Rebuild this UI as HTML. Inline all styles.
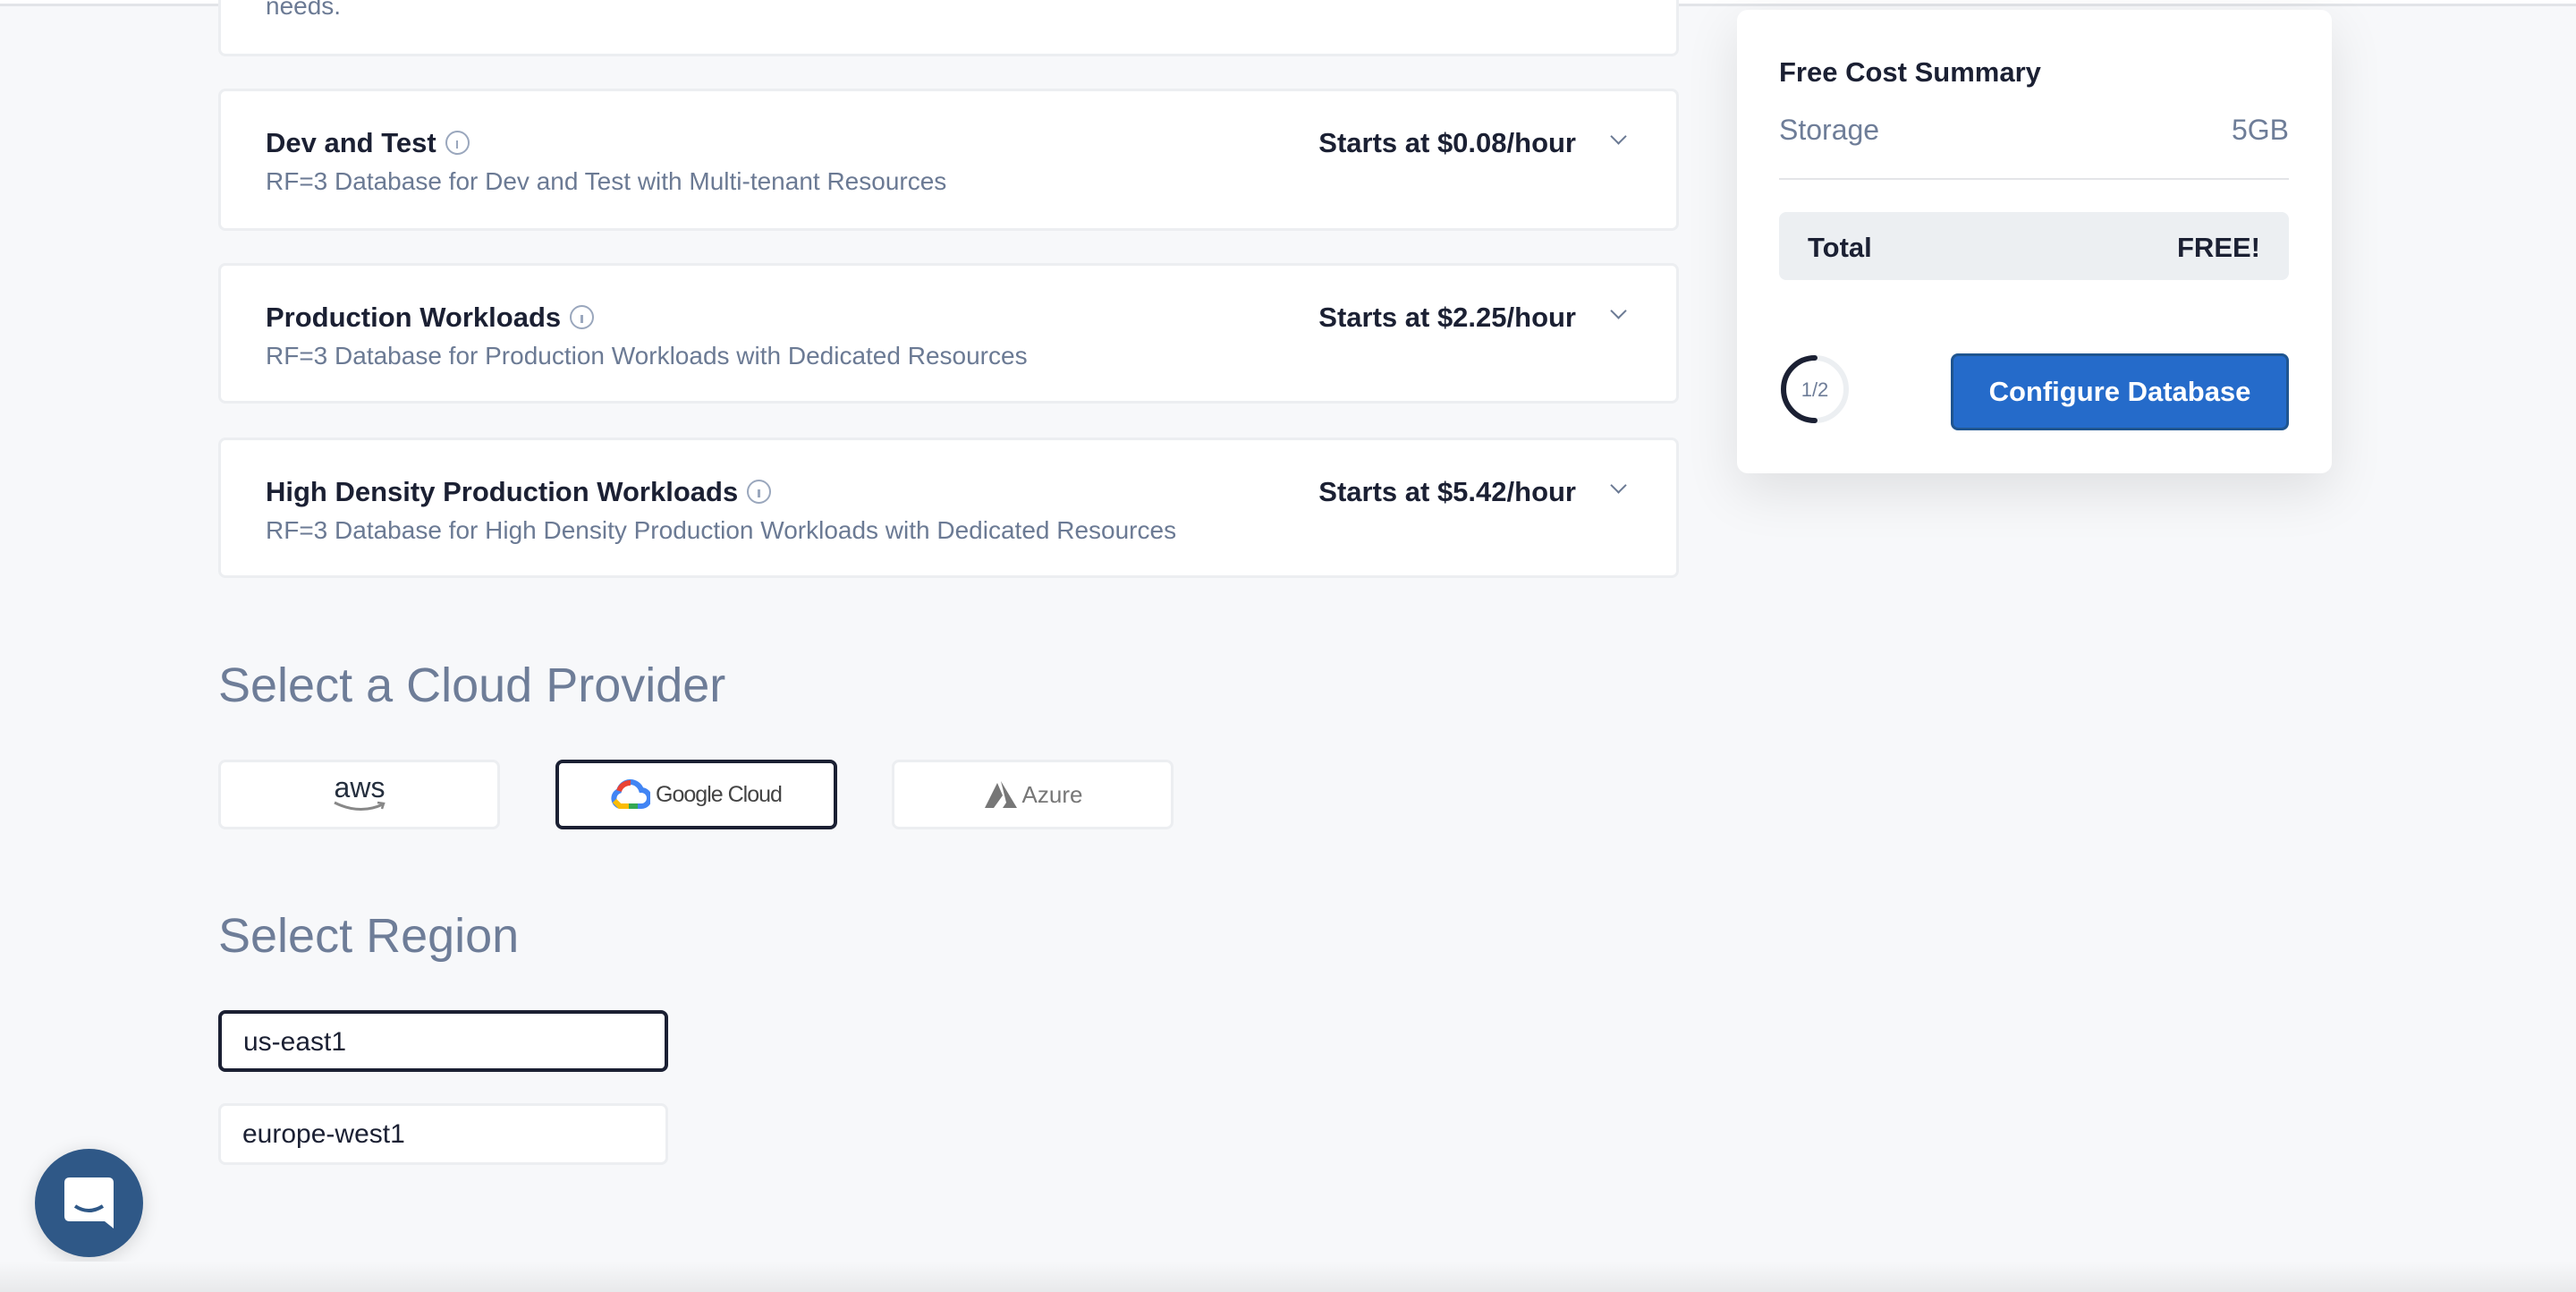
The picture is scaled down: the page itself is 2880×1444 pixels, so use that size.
<!DOCTYPE html>
<html><head><meta charset="utf-8"><style>
*{box-sizing:border-box;margin:0;padding:0}
body{width:2880px;height:1444px;background:#f7f8fa;font-family:"Liberation Sans",sans-serif;position:relative;overflow:hidden;color:#1b2033}
.topline{position:absolute;left:0;top:0;width:2880px;height:7px;background:#fff;border-bottom:3px solid #e2e4e8}
.card{position:absolute;left:244px;width:1633px;background:#fff;border:3px solid #eceef1;border-radius:8px}
.t{position:absolute;left:50px;font-size:31px;font-weight:bold;color:#1b2033}
.d{position:absolute;left:50px;font-size:28px;color:#6b7a94}
.p{position:absolute;right:112px;font-size:31px;font-weight:bold}
.chev{position:absolute;right:58px;width:13px;height:13px;border-right:2.5px solid #6b7a94;border-bottom:2.5px solid #6b7a94;transform:rotate(45deg)}
.info{display:inline-block;width:27px;height:27px;border:2.5px solid #9aa7bd;border-radius:50%;vertical-align:-3px;margin-left:10px;position:relative}
.info:after{content:"";position:absolute;left:10px;top:9px;width:2.5px;height:9px;background:#9aa7bd}
.h{position:absolute;left:244px;font-size:54px;color:#6e7d98}
.prov{position:absolute;top:849px;width:315px;height:78px;background:#fff;border:3px solid #eceef1;border-radius:8px;display:flex;align-items:center;justify-content:center}
.reg{position:absolute;left:244px;width:503px;height:69px;background:#fff;border:3px solid #eceef1;border-radius:8px;font-size:30px;padding-left:24px;line-height:63px}
.sum{position:absolute;left:1942px;top:11px;width:665px;height:518px;background:#fff;border-radius:12px;box-shadow:0 20px 60px rgba(0,0,0,.10)}
</style></head><body>
<div class="topline"></div>
<div class="card" style="top:-20px;height:83px"><div class="d" style="top:8px">needs.</div></div>

<div class="card" style="top:99px;height:159px"><div class="t" style="top:40px">Dev and Test<span class="info"></span></div><div class="d" style="top:85px">RF=3 Database for Dev and Test with Multi-tenant Resources</div><div class="p" style="top:40px">Starts at $0.08/hour</div><div class="chev" style="top:44px"></div></div>
<div class="card" style="top:294px;height:157px"><div class="t" style="top:40px">Production Workloads<span class="info"></span></div><div class="d" style="top:85px">RF=3 Database for Production Workloads with Dedicated Resources</div><div class="p" style="top:40px">Starts at $2.25/hour</div><div class="chev" style="top:44px"></div></div>
<div class="card" style="top:489px;height:157px"><div class="t" style="top:40px">High Density Production Workloads<span class="info"></span></div><div class="d" style="top:85px">RF=3 Database for High Density Production Workloads with Dedicated Resources</div><div class="p" style="top:40px">Starts at $5.42/hour</div><div class="chev" style="top:44px"></div></div>

<div class="h" style="top:735px">Select a Cloud Provider</div>
<div class="prov" style="left:244px"><svg width="80" height="50" viewBox="0 0 80 50"><text x="40" y="28" text-anchor="middle" font-family="Liberation Sans" font-size="32" fill="#252f3e">aws</text><path d="M12 34 Q40 48 66 36" stroke="#888" stroke-width="3" fill="none"/><path d="M60 34 L67 35 L65 41" stroke="#888" stroke-width="2.5" fill="none"/></svg></div>
<div class="prov" style="left:621px;border:4px solid #1b2033"><svg width="44" height="34" viewBox="0 0 44 34"><path d="M10 30 A9 9 0 0 1 9 13 A13 13 0 0 1 34 12 A9 9 0 0 1 34 30 Z" fill="none" stroke="#4285f4" stroke-width="6"/><path d="M9 13 A13 13 0 0 1 22 4" stroke="#ea4335" stroke-width="6" fill="none"/><path d="M4 24 L10 30 L20 30" stroke="#fbbc05" stroke-width="6" fill="none"/><path d="M20 30 L30 30" stroke="#34a853" stroke-width="6"/></svg><span style="font-size:25px;color:#444;margin-left:6px;letter-spacing:-1px">Google Cloud</span></div>
<div class="prov" style="left:997px"><svg width="40" height="34" viewBox="0 0 40 34"><path d="M2 32 L16 4 L22 18 L12 32Z M20 2 L38 32 L22 32 L26 26Z" fill="#777"/></svg><span style="font-size:26px;color:#777;margin-left:4px">Azure</span></div>

<div class="h" style="top:1015px">Select Region</div>
<div class="reg" style="top:1129px;border:4px solid #1b2033">us-east1</div>
<div class="reg" style="top:1233px">europe-west1</div>

<div style="position:absolute;left:39px;top:1284px;width:121px;height:121px;border-radius:50%;background:#2f5887;box-shadow:0 4px 20px rgba(0,0,0,.15)"><svg width="121" height="121" viewBox="0 0 121 121"><path d="M33 38 Q33 32 39 32 L82 32 Q88 32 88 38 L88 89 L78 81 L39 81 Q33 81 33 75Z" fill="#fff"/><path d="M45 64 Q60 74 76 64" stroke="#2f5887" stroke-width="4" fill="none"/></svg></div>

<div style="position:absolute;left:0;top:1410px;width:2880px;height:34px;background:linear-gradient(#f7f8fa,#e8e9eb)"></div>

<div class="sum">
<div style="position:absolute;left:47px;top:52px;font-size:31px;font-weight:bold">Free Cost Summary</div>
<div style="position:absolute;left:47px;top:116px;font-size:32px;color:#6e7d98">Storage</div>
<div style="position:absolute;right:48px;top:116px;font-size:32px;color:#6e7d98">5GB</div>
<div style="position:absolute;left:47px;right:48px;top:188px;height:2px;background:#e4e5e8"></div>
<div style="position:absolute;left:47px;right:48px;top:226px;height:76px;background:#eceff2;border-radius:8px">
<div style="position:absolute;left:32px;top:22px;font-size:31px;font-weight:bold">Total</div>
<div style="position:absolute;right:32px;top:22px;font-size:31px;font-weight:bold">FREE!</div></div>
<svg style="position:absolute;left:47px;top:384px" width="80" height="80" viewBox="0 0 80 80"><circle cx="40" cy="40" r="35" stroke="#eceff2" stroke-width="6" fill="none"/><path d="M40 5 A35 35 0 0 0 40 75" stroke="#1b2033" stroke-width="6" fill="none" stroke-linecap="round"/><text x="40" y="48" text-anchor="middle" font-size="22" fill="#6e7d98" font-family="Liberation Sans">1/2</text></svg>
<div style="position:absolute;left:239px;top:384px;width:378px;height:86px;background:#256bca;border:3px solid #1f5590;border-radius:8px;color:#fff;font-size:31px;font-weight:bold;text-align:center;line-height:80px">Configure Database</div>
</div>
</body></html>
